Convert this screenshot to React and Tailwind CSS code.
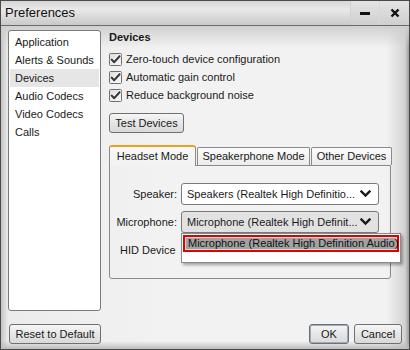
import React from "react";

function Check() {
  return (
    <svg width="13" height="13" viewBox="0 0 13 13" className="shrink-0">
      <defs>
        <linearGradient id="cbg" x1="0" y1="0" x2="1" y2="1">
          <stop offset="0" stopColor="#dcdcdc" />
          <stop offset="1" stopColor="#fafafa" />
        </linearGradient>
      </defs>
      <rect x="0.5" y="0.5" width="12" height="12" rx="1" fill="url(#cbg)" stroke="#6f6f6f" />
      <path d="M2.6 6.6 L5.1 9.3 L10.6 3.2" fill="none" stroke="#ffffff" strokeWidth="3.6" strokeLinecap="round" strokeLinejoin="round" />
      <path d="M2.6 6.6 L5.1 9.3 L10.6 3.2" fill="none" stroke="#3c3c3c" strokeWidth="2.2" strokeLinecap="round" strokeLinejoin="round" />
    </svg>
  );
}

function Chevron() {
  return (
    <svg width="11" height="8" viewBox="0 0 11 8" className="shrink-0">
      <path d="M1.5 1.5 L5.5 5.5 L9.5 1.5" fill="none" stroke="#1a1a1a" strokeWidth="2.4" strokeLinecap="square" />
    </svg>
  );
}

function Btn({ children, className = "" }) {
  return (
    <div
      className={
        "flex items-center justify-center h-[20px] rounded-[3px] border border-[#707070] bg-[linear-gradient(#f6f6f6,#e6e6e6_50%,#d9d9d9)] text-[11px] text-[#1a1a1a] whitespace-nowrap " +
        className
      }
    >
      {children}
    </div>
  );
}

export default function App() {
  const side = ["Application", "Alerts & Sounds", "Devices", "Audio Codecs", "Video Codecs", "Calls"];
  return (
    <div className="w-[410px] h-[350px] flex flex-col border border-[#4a4a4a] bg-[#f0f0f0] font-['Liberation_Sans',Arial,sans-serif] text-[#1a1a1a] overflow-hidden whitespace-nowrap">
      {/* Title bar */}
      <div className="h-[25px] shrink-0 flex items-stretch border-b border-[#6a6a6a] bg-[linear-gradient(#d6d6d6,#e9e9e9_35%,#c9c9c9)]">
        <div className="flex-1 flex items-center pl-[4px] text-[13px] text-[#111]">Preferences</div>
        <div className="w-[29px] flex items-center justify-center border-l border-[#d0d0d0] bg-[linear-gradient(#e4e4e4,#cfcfcf)]">
          <div className="w-[10px] h-[3px] bg-[#111]" />
        </div>
        <div className="w-[30px] flex items-center justify-center border-l border-[#d8d8d8] bg-[linear-gradient(#e4e4e4,#cfcfcf)]">
          <svg width="10" height="10" viewBox="0 0 10 10">
            <path d="M1.5 1.5 L8.5 8.5 M8.5 1.5 L1.5 8.5" stroke="#111" strokeWidth="2.4" />
          </svg>
        </div>
      </div>

      {/* Body */}
      <div className="flex-1 flex flex-col bg-[linear-gradient(to_right,#c4c4c4,#ececec_7px,#f2f2f2_40%,#f2f2f2_calc(100%-22px),#d2d2d2_calc(100%-4px),#9a9a9a)]">
        <div className="flex-1 flex flex-col bg-[linear-gradient(#d0d0d0,rgba(240,240,240,0)_22px,rgba(240,240,240,0)_calc(100%-8px),#bdbdbd)] px-[7px] pt-[4px] pb-[5px]">
          <div className="flex">
            {/* Sidebar */}
            <div className="w-[93px] h-[281px] rounded-[3px] border border-[#7a7a7a] bg-white pt-[2px] pl-[1px] pr-[1px]">
              {side.map((s) => (
                <div
                  key={s}
                  className={
                    "h-[18px] flex items-center pl-[5px] text-[11px] " + (s === "Devices" ? "bg-[#e6e6e6]" : "")
                  }
                >
                  {s}
                </div>
              ))}
            </div>

            {/* Content */}
            <div className="flex flex-col ml-[8px] w-[283px]">
              <div className="h-[14px] flex items-center text-[11px] font-bold">Devices</div>
              <div className="flex flex-col gap-[5px] mt-[9px]">
                {["Zero-touch device configuration", "Automatic gain control", "Reduce background noise"].map((t) => (
                  <div key={t} className="flex items-center h-[13px] gap-[4px] text-[11px]">
                    <Check />
                    <span>{t}</span>
                  </div>
                ))}
              </div>
              <Btn className="mt-[11px] w-[75px]">Test Devices</Btn>

              {/* Tabs */}
              <div className="mt-[12px] flex items-end h-[21px] relative z-10">
                <div className="w-[87px] h-[21px] flex items-center justify-center text-[11px] bg-[linear-gradient(#f8f8f8,#f2f2f2)] border border-b-0 border-[#8a8a8a] border-t-[2px] border-t-[#f0a020] rounded-t-[3px]">
                  Headset Mode
                </div>
                <div className="ml-[1px] w-[113px] h-[18px] mb-[1px] flex items-center justify-center text-[11px] bg-[linear-gradient(#fbfbfb,#ececec)] border border-b-0 border-[#8a8a8a] rounded-t-[2px]">
                  Speakerphone Mode
                </div>
                <div className="ml-[1px] w-[81px] h-[18px] mb-[1px] flex items-center justify-center text-[11px] bg-[linear-gradient(#fbfbfb,#ececec)] border border-b-0 border-[#8a8a8a] rounded-t-[2px]">
                  Other Devices
                </div>
              </div>
              <div className="-mt-[1px] w-[282px] h-[114px] border border-[#8a8a8a] rounded-b-[3px] pt-[17px] pr-[12px] relative">
                <div className="grid grid-cols-[67px_198px] gap-x-[4px] gap-y-[6px]">
                  <div className="h-[22px] flex items-center justify-end text-[11px]">Speaker:</div>
                  <div className="h-[22px] flex items-center justify-between rounded-[3px] border border-[#7a7a7a] bg-white pl-[5px] pr-[7px] text-[11px]">
                    <span>Speakers (Realtek High Definitio...</span>
                    <Chevron />
                  </div>
                  <div className="h-[22px] flex items-center justify-end text-[11px]">Microphone:</div>
                  <div className="h-[22px] flex items-center justify-between rounded-[3px] border border-[#7a7a7a] bg-[#e2e2e2] pl-[5px] pr-[7px] text-[11px]">
                    <span>Microphone (Realtek High Definit...</span>
                    <Chevron />
                  </div>
                  <div className="h-[22px] flex items-center justify-start pl-[10px] text-[11px]">HID Device</div>
                  <div className="h-[22px] flex items-center rounded-[3px] border border-[#7a7a7a] bg-white pl-[5px] text-[11px]">
                    <span>(</span>
                  </div>
                </div>

                {/* Dropdown popup */}
                <div className="absolute left-[71px] top-[67px] w-[220px] h-[30px] bg-white border border-[#8a8a8a] shadow-[2px_2px_3px_rgba(0,0,0,0.35)] p-[1px]">
                  <div className="h-[17px] border-2 border-[#e00000]">
                    <div className="h-full flex items-center border border-[#d8d8d8] bg-[#a2a2a2] pl-[2px] text-[11px] text-[#111] whitespace-nowrap">
                      Microphone (Realtek High Definition Audio)
                    </div>
                  </div>
                </div>
              </div>
            </div>
          </div>

          {/* Bottom buttons */}
          <div className="flex items-center mt-auto pl-[1px] pr-[0px]">
            <Btn className="w-[92px]">Reset to Default</Btn>
            <div className="flex-1" />
            <Btn className="w-[40px] border-[#1f2f7a] shadow-[inset_0_0_0_1px_#9ab]">OK</Btn>
            <Btn className="w-[48px] ml-[5px]">Cancel</Btn>
          </div>
        </div>
      </div>
    </div>
  );
}
